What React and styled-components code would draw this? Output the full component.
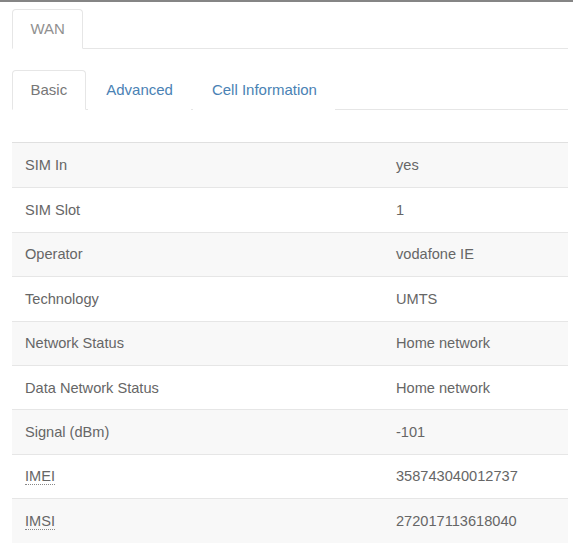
import React from 'react'
import styled, { createGlobalStyle } from 'styled-components'

const GlobalStyle = createGlobalStyle`
  html, body {
    margin: 0;
    padding: 0;
    background: #fff;
  }
  body {
    font-family: "Liberation Sans", Arial, Helvetica, sans-serif;
    font-size: 14.6px;
    color: #666;
  }
`

const Page = styled.div`
  border-top: 2px solid #858585;
  padding: 7px 5px 0 12px;
`

const TabBar = styled.ul`
  display: flex;
  list-style: none;
  margin: 0 0 ${(p) => p.gap}px;
  padding: 0;
  border-bottom: 1px solid #e6e6e6;
`

const Tab = styled.li`
  margin: 0 2px -1px 0;
  padding: 0 17.5px;
  height: 38px;
  line-height: 38px;
  font-size: 15px;
  border: 1px solid ${(p) => (p.active ? '#e6e6e6' : 'transparent')};
  border-bottom-color: ${(p) => (p.active ? '#fff' : 'transparent')};
  border-radius: 4px 4px 0 0;
  background: #fff;
  color: ${(p) => (p.active ? (p.muted ? '#909090' : '#777') : '#4a82b4')};
  cursor: pointer;
`

const Table = styled.div`
  border-top: 1px solid #e0e0e0;
`

const Row = styled.div`
  display: grid;
  grid-template-columns: 371px 1fr;
  align-items: center;
  height: 44.4px;
  box-sizing: border-box;
  border-top: ${(p) => (p.first ? 'none' : '1px solid #e6e6e6')};
  background: ${(p) => (p.striped ? '#f8f8f8' : '#fff')};
`

const Cell = styled.div`
  padding: 0 13px;
  color: #666;
`

const Abbr = styled.abbr`
  text-decoration: none;
  border-bottom: 1px dotted #888;
  cursor: help;
`

const rows = [
  { label: 'SIM In', value: 'yes' },
  { label: 'SIM Slot', value: '1' },
  { label: 'Operator', value: 'vodafone IE' },
  { label: 'Technology', value: 'UMTS' },
  { label: 'Network Status', value: 'Home network' },
  { label: 'Data Network Status', value: 'Home network' },
  { label: 'Signal (dBm)', value: '-101' },
  { label: 'IMEI', value: '358743040012737', abbr: 'International Mobile Equipment Identity' },
  { label: 'IMSI', value: '272017113618040', abbr: 'International Mobile Subscriber Identity' },
]

export default function App() {
  return (
    <Page>
      <GlobalStyle />
      <TabBar gap={21}>
        <Tab active muted>WAN</Tab>
      </TabBar>
      <TabBar gap={32}>
        <Tab active>Basic</Tab>
        <Tab>Advanced</Tab>
        <Tab>Cell Information</Tab>
      </TabBar>
      <Table>
        {rows.map((r, i) => (
          <Row key={r.label} first={i === 0} striped={i % 2 === 0}>
            <Cell>{r.abbr ? <Abbr title={r.abbr}>{r.label}</Abbr> : r.label}</Cell>
            <Cell>{r.value}</Cell>
          </Row>
        ))}
      </Table>
    </Page>
  )
}
